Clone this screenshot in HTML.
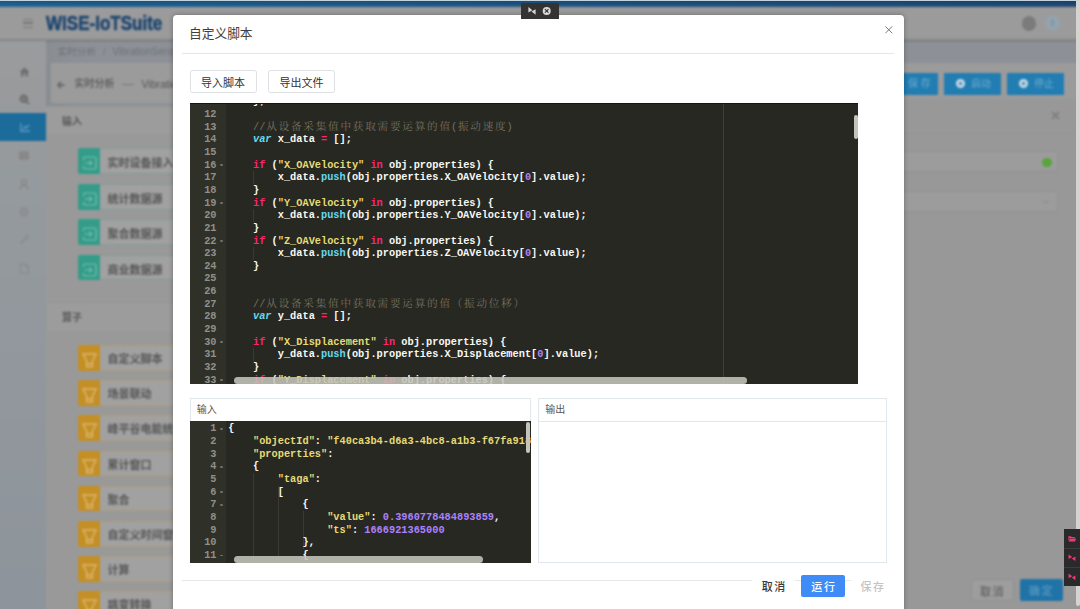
<!DOCTYPE html>
<html lang="zh-CN">
<head>
<meta charset="utf-8">
<title>自定义脚本</title>
<style>
*{box-sizing:border-box;margin:0;padding:0}
html,body{width:1080px;height:609px;overflow:hidden;background:#999}
body{position:relative;font-family:"Liberation Sans","Noto Sans CJK SC",sans-serif;font-size:11px;color:#333}
.abs{position:absolute}
/* ---------- dimmed, blurred background app ---------- */
#bg{position:absolute;left:-12px;top:-12px;width:1104px;height:633px;filter:blur(1.3px);background:#999;overflow:hidden}
#bgi{position:absolute;left:12px;top:12px;width:1080px;height:609px}
#bg .strip{left:-12px;top:-4px;width:1104px;height:10.6px;background:linear-gradient(rgba(0,0,0,.12) 4px,rgba(255,255,255,.04)),linear-gradient(90deg,#1b5f92,#1a4572)}
#bg .hdr{left:-12px;top:6.5px;width:1104px;height:35.5px;background:linear-gradient(#9b9b9b 31px,#7b7c7e 34.2px,#83858a 35.5px)}
#bg .burger{left:22.8px;top:19px;width:10.6px;height:8.6px;border-top:1.6px solid #767676;border-bottom:1.6px solid #767676}
#bg .burger i{position:absolute;left:0;top:2.05px;width:10.6px;height:1.6px;background:#767676}
#bg .logo{left:46.3px;top:10.2px;font-weight:bold;font-size:20px;color:#1f4670;line-height:26px;transform:scaleX(.851);transform-origin:0 0;white-space:nowrap;-webkit-text-stroke:.6px #1f4670}
#bg .side{left:-12px;top:41px;width:57.5px;height:585px;background:linear-gradient(#9a9b9c,#959a9e 25%,#8d949b 100%)}
#bg .act{left:-12px;top:113px;width:57.5px;height:28px;background:#1b6b9b}
#bg .crumb{left:45.5px;top:41.5px;width:1040px;height:65px;background:linear-gradient(90deg,#898e93,#8d9197 30px);color:#6c7177;font-size:9.6px;line-height:19.4px;padding-left:12.5px;white-space:nowrap}
#bg .title{left:51px;top:63.3px;width:1040px;height:39.6px;background:#9b9b9b;color:#555;font-weight:500;font-size:10px;line-height:43px;padding-left:7px;white-space:nowrap}
#bg .ph{left:47px;width:1040px;height:31px;border-bottom:1px solid #979797;border-top:1px solid #969696;background:#9c9c9c;font-weight:bold;font-size:10px;line-height:30px;padding-left:15px;color:#585858}
.node{position:absolute;left:78px;width:200px;height:25.5px;border-radius:2px;background:#a1a1a1;font-size:11px;line-height:24.6px;color:#565656;font-weight:bold;padding-left:28.4px;white-space:nowrap}
.node b{position:absolute;left:-1px;top:-1px;width:21.8px;height:25.5px;border-radius:2px 0 0 2px}
.node b svg{position:absolute;left:3.6px;top:7.8px;overflow:visible}
.node.g{border:1px solid #839d97;line-height:28.4px}
.node.g b{background:#349c89}
.node.o{border:1px solid #ad9d76;line-height:26px}
.node.o b{background:#c48f24}
.bbtn{position:absolute;top:72.6px;height:22.2px;width:57px;background:#217db2;border-radius:1px;color:#64a4c9;font-weight:500;font-size:10px;line-height:22px;padding-left:27px;white-space:nowrap}
.bbtn i{position:absolute;left:11.5px;top:6.6px;width:9.2px;height:9.2px;border-radius:50%;background:#c9dbe6;border:0}
.bbtn i::after{content:"";position:absolute;left:3px;top:3px;width:3.2px;height:3.2px;background:#3a86b4;border-radius:1px}
.fld{position:absolute;left:600px;width:458px;height:21px;border:1px solid #919191;border-radius:2px;background:#9c9c9c}
/* ---------- chrome bits above everything ---------- */
#sb{left:1076px;top:1px;width:4px;height:604.5px;background:#d4d4d0;border-radius:0 0 2px 2px}
#tv{left:521.3px;top:3px;width:37.3px;height:15.5px;background:#333}
#rw{left:1064px;top:529px;width:16.5px;height:57px;background:#2a2a2c}
#rw i{position:absolute;left:0;width:16px;height:1px;background:#3c3c3e}
/* ---------- modal ---------- */
#modal{left:173px;top:14.5px;width:731px;height:620px;background:#fff;border-radius:4px;box-shadow:0 0 5px rgba(0,0,0,.3)}
#mt{left:15.6px;top:9px;font-size:12.7px;line-height:20px;color:#3e3e3e;white-space:nowrap}
.hr{position:absolute;left:8.5px;width:712px;height:1px;background:#e5e7e9}
.wb{position:absolute;top:55.5px;width:67px;height:22.5px;border:1px solid #dee1e4;border-radius:2.5px;background:#fff;font-size:11px;line-height:21px;padding-top:1.6px;text-align:center;color:#333;white-space:nowrap}
/* ace-like editors */
.ace{position:absolute;background:#272822;overflow:hidden;font-family:"Liberation Mono","Noto Serif CJK SC",monospace;font-weight:bold;font-size:10.31px;line-height:12.655px;color:#f8f8f2}
.ace .gut{position:absolute;left:0;top:0;bottom:0;width:36px;background:#2f3129;color:#8f908a}
.ace .ln{position:absolute;left:0;width:27px;text-align:right;height:12.655px;white-space:pre}
.ace .fd{position:absolute;left:30.5px;width:3px;height:1.6px;background:#6f706a;border-radius:1px}
.ace .l{position:absolute;left:38.8px;height:12.655px;white-space:pre}
.ace .k{color:#f92672}.ace .s{color:#e6db74}.ace .f{color:#66d9ef}.ace .v{color:#66d9ef;font-style:italic}.ace .n{color:#ae81ff}
.ace .c{color:#75715e;font-weight:normal}
.ace .c .z{font-size:10.6px;letter-spacing:1.772px;padding-left:.9px;margin-right:-.9px}
.ace .ig{position:absolute;width:1px;background:#3b3a32}
.ace .hs{position:absolute;height:7px;border-radius:4px;background:rgba(196,196,186,.88)}
.ace .vs{position:absolute;width:4.5px;border-radius:2px;background:#c4c4bc}
.pn{position:absolute;top:383.8px;height:165px;border:1px solid #e0e8ec;background:#fff}
.pn .pt{position:absolute;left:0;top:0;right:0;height:22.4px;border-bottom:1px solid #e0e8ec;font-size:10px;line-height:22px;padding-left:6.2px;color:#555}
.fb{position:absolute;top:560.5px;height:21.5px;font-size:11px;line-height:21px;padding-top:2.2px;text-align:center;letter-spacing:1.6px;padding-left:1.6px;white-space:nowrap;font-weight:500;background:#fff}
</style>
</head>
<body>
<div id="bg"><div id="bgi">
  <div class="abs strip"></div>
  <div class="abs hdr"></div>
  <div class="abs burger"><i></i></div>
  <div class="abs logo">WISE-IoTSuite</div>
  <div class="abs crumb"><span class="abs" style="left:12.2px;top:0.5px">实时分析</span><span class="abs" style="left:57.5px;top:0.5px">/</span><span class="abs" style="left:66.8px;top:0.5px;font-size:10px">VibrationSensor</span></div>
  <div class="abs title"><svg class="abs" style="left:6.2px;top:17.4px" width="8" height="8" viewBox="0 0 8 8"><path d="M7.8 4H1M4 .8.8 4 4 7.2" fill="none" stroke="#5f5f5f" stroke-width="1.3"/></svg><span class="abs" style="left:23.6px;top:0;line-height:42.4px">实时分析</span><span class="abs" style="left:71px;top:20.7px;width:12px;height:1px;background:#777"></span><span class="abs" style="left:90.5px;top:0;line-height:42.4px;font-size:10.6px">VibrationSensor</span></div>
  <div class="abs side"></div>
  <div class="abs act"></div>
  <svg class="abs" style="left:18.5px;top:66.5px" width="11" height="10" viewBox="0 0 11 10"><path d="M5.5.6 10.4 5H9v4.4H6.6V6.6H4.4v2.8H2V5H.6z" fill="#6e6e6e"/></svg>
  <svg class="abs" style="left:18.5px;top:94px" width="11" height="11" viewBox="0 0 11 11"><circle cx="4.8" cy="4.8" r="3.6" fill="#7a7a7a" stroke="#6c6c6c" stroke-width="1.4"/><path d="M7.4 7.4 10 10" stroke="#6c6c6c" stroke-width="1.8"/></svg>
  <svg class="abs" style="left:19.5px;top:122.5px" width="10" height="9" viewBox="0 0 10 9"><path d="M.8 0v8.2H10M3 6.2l2-2.6 1.6 1.4L9 1.6" fill="none" stroke="#5c9ac0" stroke-width="1.4"/></svg>
  <svg class="abs" style="left:19px;top:151px" width="10" height="9" viewBox="0 0 10 9"><path d="M.7.7h8.6v7.6H.7zM.7 3.4h8.6M.7 5.9h8.6M3.6 3.4v4.9" fill="#8d8d8d" stroke="#858585" stroke-width="1.1"/></svg>
  <svg class="abs" style="left:19px;top:178.5px" width="10" height="11" viewBox="0 0 10 11"><circle cx="5" cy="3.2" r="2.4" fill="none" stroke="#868686" stroke-width="1.2"/><path d="M.8 10.6c0-2.6 1.8-4.2 4.2-4.2s4.2 1.6 4.2 4.2" fill="none" stroke="#868686" stroke-width="1.2"/></svg>
  <svg class="abs" style="left:19px;top:206.5px" width="10" height="10" viewBox="0 0 10 10"><circle cx="5" cy="5" r="3.6" fill="none" stroke="#888" stroke-width="1.6"/><circle cx="5" cy="5" r="1.2" fill="#888"/></svg>
  <svg class="abs" style="left:19px;top:235px" width="10" height="10" viewBox="0 0 10 10"><path d="M1.4 8.6 7 3" stroke="#8a8a8a" stroke-width="1.6"/><circle cx="7.6" cy="2.4" r="1.7" fill="none" stroke="#8a8a8a" stroke-width="1.1"/></svg>
  <svg class="abs" style="left:20px;top:262.5px" width="9" height="11" viewBox="0 0 9 11"><path d="M.7.7h5l2.6 2.6v7H.7zM5.4.7v3h3" fill="none" stroke="#8a8a8a" stroke-width="1.1"/></svg>
  <div class="abs ph" style="top:106px">输入</div>
  <div class="abs ph" style="top:301.5px">算子</div>
  <div class="node g" style="top:148.3px"><b><svg width="15" height="14" viewBox="0 0 15 14" fill="none" stroke="#79bfb2" stroke-width="1.2"><path d="M1.5 4V2.5a1.5 1.5 0 0 1 1.5-1.5h9.5a1.5 1.5 0 0 1 1.5 1.5v9a1.5 1.5 0 0 1-1.5 1.5H3a1.5 1.5 0 0 1-1.5-1.5V10"/><path d="M2.5 7h7M7.3 4.6 9.8 7 7.3 9.4"/></svg></b>实时设备接入</div>
  <div class="node g" style="top:184px"><b><svg width="15" height="14" viewBox="0 0 15 14" fill="none" stroke="#79bfb2" stroke-width="1.2"><path d="M1.5 4V2.5a1.5 1.5 0 0 1 1.5-1.5h9.5a1.5 1.5 0 0 1 1.5 1.5v9a1.5 1.5 0 0 1-1.5 1.5H3a1.5 1.5 0 0 1-1.5-1.5V10"/><path d="M2.5 7h7M7.3 4.6 9.8 7 7.3 9.4"/></svg></b>统计数据源</div>
  <div class="node g" style="top:219.3px"><b><svg width="15" height="14" viewBox="0 0 15 14" fill="none" stroke="#79bfb2" stroke-width="1.2"><path d="M1.5 4V2.5a1.5 1.5 0 0 1 1.5-1.5h9.5a1.5 1.5 0 0 1 1.5 1.5v9a1.5 1.5 0 0 1-1.5 1.5H3a1.5 1.5 0 0 1-1.5-1.5V10"/><path d="M2.5 7h7M7.3 4.6 9.8 7 7.3 9.4"/></svg></b>聚合数据源</div>
  <div class="node g" style="top:254.8px"><b><svg width="15" height="14" viewBox="0 0 15 14" fill="none" stroke="#79bfb2" stroke-width="1.2"><path d="M1.5 4V2.5a1.5 1.5 0 0 1 1.5-1.5h9.5a1.5 1.5 0 0 1 1.5 1.5v9a1.5 1.5 0 0 1-1.5 1.5H3a1.5 1.5 0 0 1-1.5-1.5V10"/><path d="M2.5 7h7M7.3 4.6 9.8 7 7.3 9.4"/></svg></b>商业数据源</div>
  <div class="node o" style="top:345px"><b><svg width="15" height="15" viewBox="0 0 15 15" fill="none" stroke="#dcb874" stroke-width="1.4" style="left:3.8px;top:8px"><path d="M1 1h13l-3.6 7.2v5.6h-5.8v-5.6z"/><path d="M5 10.6h5"/></svg></b>自定义脚本</div>
  <div class="node o" style="top:380.2px"><b><svg width="15" height="15" viewBox="0 0 15 15" fill="none" stroke="#dcb874" stroke-width="1.4" style="left:3.8px;top:8px"><path d="M1 1h13l-3.6 7.2v5.6h-5.8v-5.6z"/><path d="M5 10.6h5"/></svg></b>场景联动</div>
  <div class="node o" style="top:415.4px"><b><svg width="15" height="15" viewBox="0 0 15 15" fill="none" stroke="#dcb874" stroke-width="1.4" style="left:3.8px;top:8px"><path d="M1 1h13l-3.6 7.2v5.6h-5.8v-5.6z"/><path d="M5 10.6h5"/></svg></b>峰平谷电能统计</div>
  <div class="node o" style="top:450.6px"><b><svg width="15" height="15" viewBox="0 0 15 15" fill="none" stroke="#dcb874" stroke-width="1.4" style="left:3.8px;top:8px"><path d="M1 1h13l-3.6 7.2v5.6h-5.8v-5.6z"/><path d="M5 10.6h5"/></svg></b>累计窗口</div>
  <div class="node o" style="top:485.8px"><b><svg width="15" height="15" viewBox="0 0 15 15" fill="none" stroke="#dcb874" stroke-width="1.4" style="left:3.8px;top:8px"><path d="M1 1h13l-3.6 7.2v5.6h-5.8v-5.6z"/><path d="M5 10.6h5"/></svg></b>聚合</div>
  <div class="node o" style="top:521px"><b><svg width="15" height="15" viewBox="0 0 15 15" fill="none" stroke="#dcb874" stroke-width="1.4" style="left:3.8px;top:8px"><path d="M1 1h13l-3.6 7.2v5.6h-5.8v-5.6z"/><path d="M5 10.6h5"/></svg></b>自定义时间窗口</div>
  <div class="node o" style="top:556.2px"><b><svg width="15" height="15" viewBox="0 0 15 15" fill="none" stroke="#dcb874" stroke-width="1.4" style="left:3.8px;top:8px"><path d="M1 1h13l-3.6 7.2v5.6h-5.8v-5.6z"/><path d="M5 10.6h5"/></svg></b>计算</div>
  <div class="node o" style="top:591.4px"><b><svg width="15" height="15" viewBox="0 0 15 15" fill="none" stroke="#dcb874" stroke-width="1.4" style="left:3.8px;top:8px"><path d="M1 1h13l-3.6 7.2v5.6h-5.8v-5.6z"/><path d="M5 10.6h5"/></svg></b>跳变转换</div>
  <div class="bbtn" style="left:881px">保 存</div>
  <div class="bbtn" style="left:944px"><i></i>启动</div>
  <div class="bbtn" style="left:1007px"><i></i>停止</div>
  <div class="abs" style="left:600px;top:99px;width:490px;height:520px;background:#989898"></div>
  <div class="abs" style="left:600px;top:133px;width:490px;height:1px;background:#969696"></div>
  <div class="fld" style="top:151.3px"></div>
  <div class="fld" style="top:190.7px"></div>
  <div class="abs" style="left:1021.5px;top:16px;width:14.5px;height:14.5px;border-radius:50%;background:#7b7b7b"></div>
  <div class="abs" style="left:1044.5px;top:15px;width:15.5px;height:15.5px;border-radius:50%;background:#94a3ac"><i class="abs" style="left:6.2px;top:4.2px;width:3px;height:6.6px;border-radius:1.5px;background:#8099a8"></i></div>
  <svg class="abs" style="left:1050.5px;top:111px" width="9" height="9" viewBox="0 0 9 9"><path d="M1 1l7 7M8 1l-7 7" stroke="#777" stroke-width="1.3"/></svg>
  <div class="abs" style="left:1042.2px;top:157.6px;width:9.4px;height:9.4px;border-radius:50%;background:#58a539"></div>
  <svg class="abs" style="left:1042px;top:198.5px" width="8" height="5" viewBox="0 0 8 5"><path d="M.7.7l3.3 3.3L7.3.7" fill="none" stroke="#888" stroke-width="1"/></svg>
  <div class="abs" style="left:46px;top:134px;width:1040px;height:1px;background:#979797"></div>
  <div class="abs" style="left:971.3px;top:579px;width:42.4px;height:22px;border:1px solid #909090;border-radius:2px;background:#9d9d9d;color:#6a6a6a;font-size:11px;font-weight:bold;line-height:20px;padding-top:2.2px;text-align:center;letter-spacing:1.5px">取消</div>
  <div class="abs" style="left:1019.7px;top:579.3px;width:43.8px;height:21.6px;border-radius:2px;background:#1f73a7;color:#4f93bd;font-size:11px;font-weight:bold;line-height:21px;padding-top:2.2px;text-align:center;letter-spacing:1.5px">确定</div>
</div></div>
<div class="abs" style="left:0;top:0;width:1080px;height:1px;background:linear-gradient(#e6edf2,#9fb9cb)"></div>
<div class="abs" id="sb"></div>
<div class="abs" id="modal"><div class="abs" style="left:.5px;top:0;width:730px;height:600px">
  <div class="abs" id="mt">自定义脚本</div>
  <svg class="abs" style="left:711.6px;top:11.7px" width="7.6" height="7.6" viewBox="0 0 7.6 7.6"><path d="M.4.4l6.8 6.8M7.2.4L.4 7.2" stroke="#6a6a6a" stroke-width=".9"/></svg>
  <div class="hr" style="top:38.5px"></div>
  <div class="wb" style="left:16px">导入脚本</div>
  <div class="wb" style="left:94.5px">导出文件</div>
  <div class="ace" id="e1" style="left:16px;top:88px;width:668.5px;height:281px"><div class="gut"><div class="ln" style="top:-7.20px">11</div><div class="ln" style="top:5.45px">12</div><div class="ln" style="top:18.11px">13</div><div class="ln" style="top:30.76px">14</div><div class="ln" style="top:43.42px">15</div><div class="ln" style="top:56.07px">16</div><i class="fd" style="top:61.67px"></i><div class="ln" style="top:68.73px">17</div><div class="ln" style="top:81.38px">18</div><div class="ln" style="top:94.04px">19</div><i class="fd" style="top:99.64px"></i><div class="ln" style="top:106.69px">20</div><div class="ln" style="top:119.35px">21</div><div class="ln" style="top:132.00px">22</div><i class="fd" style="top:137.60px"></i><div class="ln" style="top:144.66px">23</div><div class="ln" style="top:157.31px">24</div><div class="ln" style="top:169.97px">25</div><div class="ln" style="top:182.62px">26</div><div class="ln" style="top:195.28px">27</div><div class="ln" style="top:207.94px">28</div><div class="ln" style="top:220.59px">29</div><div class="ln" style="top:233.25px">30</div><i class="fd" style="top:238.84px"></i><div class="ln" style="top:245.90px">31</div><div class="ln" style="top:258.56px">32</div><div class="ln" style="top:271.21px">33</div><i class="fd" style="top:276.81px"></i></div><i class="ig" style="left:63.54px;top:68.73px;height:12.65px"></i><i class="ig" style="left:63.54px;top:106.69px;height:12.65px"></i><i class="ig" style="left:63.54px;top:144.66px;height:12.65px"></i><i class="ig" style="left:63.54px;top:245.90px;height:12.65px"></i><div class="l" style="top:-7.20px">    };</div><div class="l" style="top:18.11px">    <span class="c">//<span class="z">从设备采集值中获取需要运算的值</span>(<span class="z">振动速度</span>)</span></div><div class="l" style="top:30.76px">    <span class="v">var</span> x_data <span class="k">=</span> [];</div><div class="l" style="top:56.07px">    <span class="k">if</span> (<span class="s">"X_OAVelocity"</span> <span class="k">in</span> obj.properties) {</div><div class="l" style="top:68.73px">        x_data.<span class="f">push</span>(obj.properties.X_OAVelocity[<span class="n">0</span>].value);</div><div class="l" style="top:81.38px">    }</div><div class="l" style="top:94.04px">    <span class="k">if</span> (<span class="s">"Y_OAVelocity"</span> <span class="k">in</span> obj.properties) {</div><div class="l" style="top:106.69px">        x_data.<span class="f">push</span>(obj.properties.Y_OAVelocity[<span class="n">0</span>].value);</div><div class="l" style="top:119.35px">    }</div><div class="l" style="top:132.00px">    <span class="k">if</span> (<span class="s">"Z_OAVelocity"</span> <span class="k">in</span> obj.properties) {</div><div class="l" style="top:144.66px">        x_data.<span class="f">push</span>(obj.properties.Z_OAVelocity[<span class="n">0</span>].value);</div><div class="l" style="top:157.31px">    }</div><div class="l" style="top:195.28px">    <span class="c">//<span class="z">从设备采集值中获取需要运算的值（振动位移）</span></span></div><div class="l" style="top:207.94px">    <span class="v">var</span> y_data <span class="k">=</span> [];</div><div class="l" style="top:233.25px">    <span class="k">if</span> (<span class="s">"X_Displacement"</span> <span class="k">in</span> obj.properties) {</div><div class="l" style="top:245.90px">        y_data.<span class="f">push</span>(obj.properties.X_Displacement[<span class="n">0</span>].value);</div><div class="l" style="top:258.56px">    }</div><div class="l" style="top:271.21px">    <span class="k">if</span> (<span class="s">"Y_Displacement"</span> <span class="k">in</span> obj.properties) {</div><i class="abs" style="left:533px;top:0;width:1px;height:281px;background:#3f403a"></i><i class="abs" style="left:0;top:0;width:668.5px;height:1px;background:#141410"></i><i class="hs" style="left:44px;top:274.2px;width:513.8px"></i><i class="vs" style="left:664px;top:12px;height:24.5px"></i></div>
  <div class="pn" style="left:16px;width:341.4px"><div class="pt">输入</div><div class="ace" id="e2" style="left:-1px;top:22px;width:341px;height:142px"><div class="gut"><div class="ln" style="top:1.20px">1</div><i class="fd" style="top:6.80px"></i><div class="ln" style="top:13.85px">2</div><div class="ln" style="top:26.51px">3</div><div class="ln" style="top:39.16px">4</div><i class="fd" style="top:44.77px"></i><div class="ln" style="top:51.82px">5</div><div class="ln" style="top:64.47px">6</div><i class="fd" style="top:70.07px"></i><div class="ln" style="top:77.13px">7</div><i class="fd" style="top:82.73px"></i><div class="ln" style="top:89.78px">8</div><div class="ln" style="top:102.44px">9</div><div class="ln" style="top:115.09px">10</div><div class="ln" style="top:127.75px">11</div><i class="fd" style="top:133.35px"></i></div><i class="ig" style="left:63.54px;top:51.82px;height:88.58px"></i><i class="ig" style="left:88.29px;top:64.47px;height:75.93px"></i><i class="ig" style="left:113.03px;top:89.78px;height:37.96px"></i><div class="l" style="top:1.20px">{</div><div class="l" style="top:13.85px">    <span class="s">"objectId"</span>: <span class="s">"f40ca3b4-d6a3-4bc8-a1b3-f67fa918b2c1"</span>,</div><div class="l" style="top:26.51px">    <span class="s">"properties"</span>:</div><div class="l" style="top:39.16px">    {</div><div class="l" style="top:51.82px">        <span class="s">"taga"</span>:</div><div class="l" style="top:64.47px">        [</div><div class="l" style="top:77.13px">            {</div><div class="l" style="top:89.78px">                <span class="s">"value"</span>: <span class="n">0.3960778484893859</span>,</div><div class="l" style="top:102.44px">                <span class="s">"ts"</span>: <span class="n">1666921365000</span></div><div class="l" style="top:115.09px">            },</div><div class="l" style="top:127.75px">            {</div><i class="hs" style="left:44.5px;top:135px;width:248.5px"></i><i class="vs" style="left:336px;top:0.8px;height:31px"></i></div></div>
  <div class="pn" style="left:364.5px;width:349px"><div class="pt">输出</div></div>
  <div class="hr" style="top:565.5px"></div>
  <div class="fb" style="left:578.5px;width:43px;color:#3a3a3a">取消</div>
  <div class="fb" style="left:627.7px;width:43.8px;background:#3f8cf6;color:#fff;border-radius:2px">运行</div>
  <div class="fb" style="left:677.3px;width:43px;color:#c4c4c4">保存</div>
</div></div>
<div class="abs" id="tv"><svg width="37" height="15.5" viewBox="0 0 37 15.5" style="position:absolute;left:0;top:0"><path d="M7.4 4.1v5.4l4-2.2zM14.6 11.7V6.3l-4 2.2z" fill="#d6d6d6"/><circle cx="25.7" cy="7.9" r="4" fill="#d9d9d9"/><path d="M23.9 6.1l3.6 3.6M27.5 6.1l-3.6 3.6" stroke="#333" stroke-width="1.2"/></svg></div>
<div class="abs" id="rw"><i style="top:19px"></i><i style="top:38px"></i><svg width="16" height="57" viewBox="0 0 16 57" style="position:absolute;left:0;top:0" fill="#ef3a6c"><path d="M4.4 7.2h2.4l.8.9h3.2v.9H5.6L4.4 12zM5.9 9.6h6.3L11 12.6H4.6z"/><path d="M4.6 25.4v4.6l3.6-2zM11.4 32v-4.6l-3.6 2z"/><path d="M4.6 44.6v4.6l3.6-2zM11.4 51.2v-4.6l-3.6 2z"/></svg></div>
</body>
</html>
